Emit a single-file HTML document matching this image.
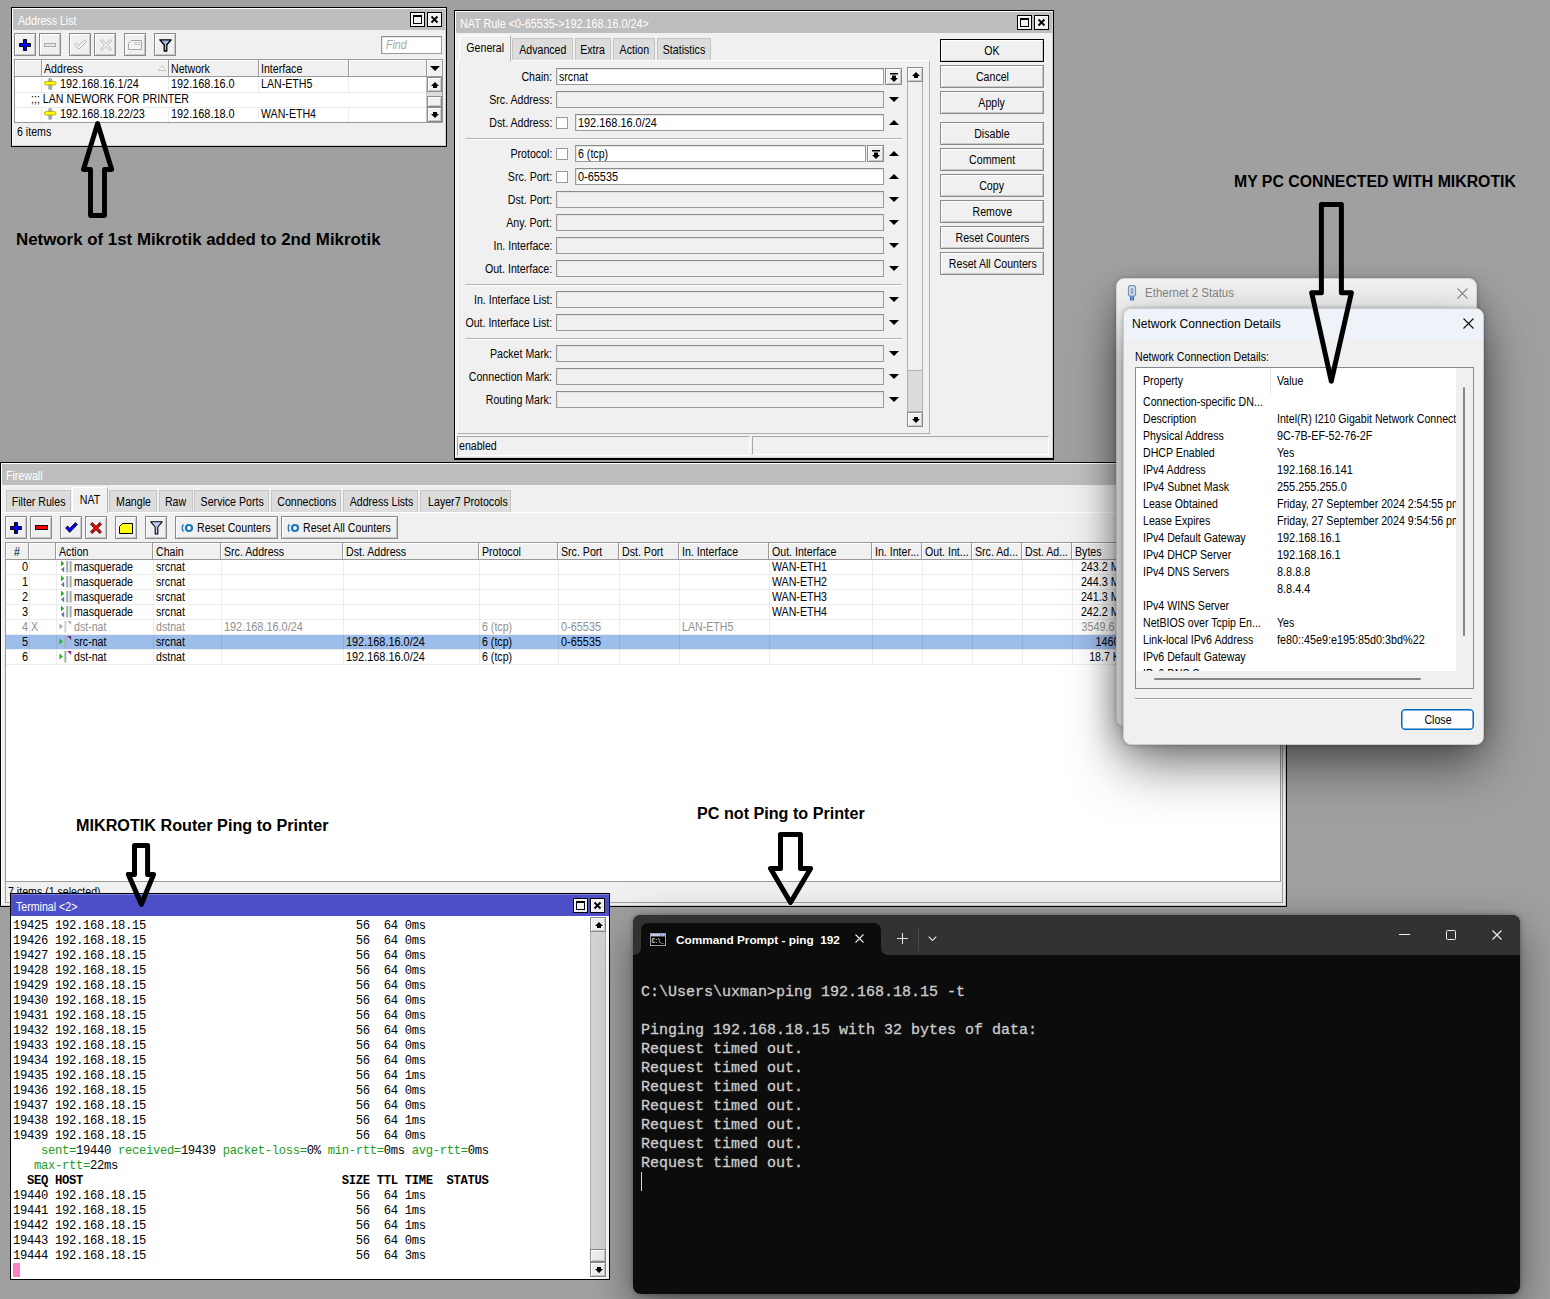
<!DOCTYPE html>
<html lang="en"><head><meta charset="utf-8"><title>Mikrotik NAT / ping screenshot</title>
<style>
*{box-sizing:border-box}
html,body{margin:0;padding:0}
body{width:1550px;height:1299px;background:#a0a0a0;position:relative;overflow:hidden;font-family:"Liberation Sans",sans-serif;font-size:12.5px;color:#000;line-height:1}
.a{position:absolute}
.win{position:absolute;background:#f0f0f0;border:1px solid #000;box-shadow:inset 1px 1px 0 #fff,inset -1px -1px 0 #d0d0d0}
.tbar{position:absolute;left:1px;right:1px;top:1px;background:#bebebe}
.tbar.act{background:#4d4fc8;border-top:1px solid #7e80e0}
.tt{position:absolute;color:#fff;white-space:nowrap;font-size:12.5px}
.n{display:inline-block;white-space:pre;transform:scaleX(0.849);transform-origin:0 50%}
.nr{display:inline-block;white-space:pre;transform:scaleX(0.849);transform-origin:100% 50%}
.nc{display:inline-block;white-space:pre;transform:scaleX(0.849);transform-origin:50% 50%}
.wb{position:absolute;width:15px;height:15px;border:1px solid #000;background:#f0f0f0;box-shadow:inset 1px 1px 0 #fff}
.btn{position:absolute;background:#f0f0f0;border:1px solid #8a8a8a;box-shadow:inset 1px 1px 0 #fff,inset -1px -1px 0 #c8c8c8;text-align:center}
.inp{position:absolute;height:17px;background:#fff;border:1px solid #9a9a9a;border-top-color:#8c8c8c;box-shadow:inset 1px 1px 0 #e3e3e3}
.inp.dis{background:#f0f0f0}
.lbl{position:absolute;text-align:right;white-space:nowrap}
.cb{position:absolute;width:12px;height:12px;background:#fff;border:1px solid #9a9a9a}
.hl{position:absolute;height:1px;background:#b4b4b4;box-shadow:0 1px 0 #fff}
.tab{position:absolute;background:#dcdcdc;border:1px solid #c4c4c4;border-bottom:none;text-align:center}
.tab.on{background:#f0f0f0;border-color:#fff #b0b0b0 #f0f0f0 #fff}
.tbl{position:absolute;background:#fff;border:1px solid #9a9a9a}
.th{position:absolute;top:0;height:17px;background:#f0f0f0;border-right:1px solid #9a9a9a;border-bottom:1px solid #9a9a9a;box-shadow:inset 1px 1px 0 #fff}
.td{position:absolute;white-space:nowrap;overflow:hidden}
.mono{font-family:"Liberation Mono",monospace}
.ann{position:absolute;font-weight:bold;white-space:nowrap;color:#000}
svg{position:absolute;overflow:visible}
</style></head>
<body>
<div class="win" style="left:0px;top:462px;width:1287px;height:445px"><div class="tbar" style="height:21px"></div><div class="tt" style="left:5px;top:7px"><span class="n">Firewall</span></div><div class="a" style="left:1px;top:49px;width:1283px;height:1px;background:#fff"></div><div class="tab" style="left:5px;top:27px;width:65px;height:22px"><span class="a" style="left:0;right:0;top:5px"><span class="nc">Filter Rules</span></span></div><div class="tab on" style="left:71px;top:24px;width:36px;height:26px"><span class="a" style="left:0;right:0;top:6px"><span class="nc">NAT</span></span></div><div class="tab" style="left:108px;top:27px;width:48px;height:22px"><span class="a" style="left:0;right:0;top:5px"><span class="nc">Mangle</span></span></div><div class="tab" style="left:158px;top:27px;width:34px;height:22px"><span class="a" style="left:0;right:0;top:5px"><span class="nc">Raw</span></span></div><div class="tab" style="left:193px;top:27px;width:75px;height:22px"><span class="a" style="left:0;right:0;top:5px"><span class="nc">Service Ports</span></span></div><div class="tab" style="left:270px;top:27px;width:70px;height:22px"><span class="a" style="left:0;right:0;top:5px"><span class="nc">Connections</span></span></div><div class="tab" style="left:342px;top:27px;width:75px;height:22px"><span class="a" style="left:0;right:0;top:5px"><span class="nc">Address Lists</span></span></div><div class="tab" style="left:419px;top:27px;width:91px;height:22px"><span class="a" style="left:0;right:0;top:5px"><span class="nc">Layer7 Protocols</span></span></div><div class="btn" style="left:4px;top:53px;width:22px;height:23px"><svg class="a" style="left:4px;top:5px" width="12" height="12"><path d="M4.5,0.5H7.5V4.5H11.5V7.5H7.5V11.5H4.5V7.5H0.5V4.5H4.5Z" fill="#0000ff" stroke="#000" stroke-width="1"/></svg></div><div class="btn" style="left:29px;top:53px;width:22px;height:23px"><svg class="a" style="left:4px;top:8px" width="13" height="6"><rect x=".5" y=".5" width="12" height="4" fill="#ff0000" stroke="#000" stroke-width=".9"/></svg></div><div class="btn" style="left:59px;top:53px;width:22px;height:23px"><svg class="a" style="left:4px;top:5px" width="13" height="12"><path d="M0.6,6L2.6,4L4.8,6.2L10.4,0.6L12.4,2.6L4.8,10.4Z" fill="#0000ff" stroke="#000" stroke-width=".8"/></svg></div><div class="btn" style="left:84px;top:53px;width:22px;height:23px"><svg class="a" style="left:4px;top:5px" width="12" height="12"><path d="M2.2,0.5L6,4.3L9.8,0.5L11.5,2.2L7.7,6L11.5,9.8L9.8,11.5L6,7.7L2.2,11.5L0.5,9.8L4.3,6L0.5,2.2Z" fill="#ff0000" stroke="#000" stroke-width=".8"/></svg></div><div class="btn" style="left:114px;top:53px;width:22px;height:23px"><svg class="a" style="left:3px;top:6px" width="14" height="11"><path d="M3.5,0.5H13.5V10.5H0.5V3.5Z" fill="#ffff00" stroke="#000"/><path d="M6.5,2.5H9M10,2.5H12" stroke="#ffffc0" stroke-width=".9"/></svg></div><div class="btn" style="left:144px;top:53px;width:22px;height:23px"><svg class="a" style="left:4px;top:4px" width="14" height="14"><path d="M0.8,0.8H12.2L7.8,6V13H5.2V6Z" fill="#c4d0f2" stroke="#000" stroke-width="1.1" stroke-linejoin="round"/></svg></div><div class="btn" style="left:174px;top:53px;width:103px;height:23px"><svg class="a" style="left:5px;top:6px" width="13" height="10"><circle cx="8" cy="5" r="3" fill="#fff" stroke="#1a78b8" stroke-width="2.2"/><path d="M2.2,1.2Q0.2,5 2.2,8.8" fill="none" stroke="#1a78b8" stroke-width="1.3"/></svg><span class="a" style="left:21px;top:5px"><span class="n">Reset Counters</span></span></div><div class="btn" style="left:280px;top:53px;width:117px;height:23px"><svg class="a" style="left:5px;top:6px" width="13" height="10"><circle cx="8" cy="5" r="3" fill="#fff" stroke="#1a78b8" stroke-width="2.2"/><path d="M2.2,1.2Q0.2,5 2.2,8.8" fill="none" stroke="#1a78b8" stroke-width="1.3"/></svg><span class="a" style="left:21px;top:5px"><span class="n">Reset All Counters</span></span></div><div class="tbl" style="left:4px;top:79px;width:1276px;height:340px"><div class="th" style="left:0px;width:23px"><span class="a" style="left:8px;top:3px"><span class="n">#</span></span></div><div class="th" style="left:23px;width:27px"><span class="a" style="left:3px;top:3px"><span class="n"></span></span></div><div class="th" style="left:50px;width:97px"><span class="a" style="left:3px;top:3px"><span class="n">Action</span></span></div><div class="th" style="left:147px;width:68px"><span class="a" style="left:3px;top:3px"><span class="n">Chain</span></span></div><div class="th" style="left:215px;width:122px"><span class="a" style="left:3px;top:3px"><span class="n">Src. Address</span></span></div><div class="th" style="left:337px;width:136px"><span class="a" style="left:3px;top:3px"><span class="n">Dst. Address</span></span></div><div class="th" style="left:473px;width:79px"><span class="a" style="left:3px;top:3px"><span class="n">Protocol</span></span></div><div class="th" style="left:552px;width:61px"><span class="a" style="left:3px;top:3px"><span class="n">Src. Port</span></span></div><div class="th" style="left:613px;width:60px"><span class="a" style="left:3px;top:3px"><span class="n">Dst. Port</span></span></div><div class="th" style="left:673px;width:90px"><span class="a" style="left:3px;top:3px"><span class="n">In. Interface</span></span></div><div class="th" style="left:763px;width:103px"><span class="a" style="left:3px;top:3px"><span class="n">Out. Interface</span></span></div><div class="th" style="left:866px;width:50px"><span class="a" style="left:3px;top:3px"><span class="n">In. Inter...</span></span></div><div class="th" style="left:916px;width:50px"><span class="a" style="left:3px;top:3px"><span class="n">Out. Int...</span></span></div><div class="th" style="left:966px;width:50px"><span class="a" style="left:3px;top:3px"><span class="n">Src. Ad...</span></span></div><div class="th" style="left:1016px;width:50px"><span class="a" style="left:3px;top:3px"><span class="n">Dst. Ad...</span></span></div><div class="th" style="left:1066px;width:61px"><span class="a" style="left:3px;top:3px"><span class="n">Bytes</span></span></div><div class="th" style="left:1127px;width:148px;border-right:none"></div><div class="a" style="left:0;top:17px;width:1274px;height:15px;background:#fff;border-bottom:1px solid #ececec;color:#000"><div class="a" style="left:23px;top:0;width:1px;height:14px;background:#ececec"></div><div class="a" style="left:50px;top:0;width:1px;height:14px;background:#ececec"></div><div class="a" style="left:147px;top:0;width:1px;height:14px;background:#ececec"></div><div class="a" style="left:215px;top:0;width:1px;height:14px;background:#ececec"></div><div class="a" style="left:337px;top:0;width:1px;height:14px;background:#ececec"></div><div class="a" style="left:473px;top:0;width:1px;height:14px;background:#ececec"></div><div class="a" style="left:552px;top:0;width:1px;height:14px;background:#ececec"></div><div class="a" style="left:613px;top:0;width:1px;height:14px;background:#ececec"></div><div class="a" style="left:673px;top:0;width:1px;height:14px;background:#ececec"></div><div class="a" style="left:763px;top:0;width:1px;height:14px;background:#ececec"></div><div class="a" style="left:866px;top:0;width:1px;height:14px;background:#ececec"></div><div class="a" style="left:916px;top:0;width:1px;height:14px;background:#ececec"></div><div class="a" style="left:966px;top:0;width:1px;height:14px;background:#ececec"></div><div class="a" style="left:1016px;top:0;width:1px;height:14px;background:#ececec"></div><div class="a" style="left:1066px;top:0;width:1px;height:14px;background:#ececec"></div><div class="a" style="left:1127px;top:0;width:1px;height:14px;background:#ececec"></div><div class="td" style="left:0;top:1px;width:22px;text-align:right"><span class="nr" style="transform:scaleX(0.872)">0</span></div><svg class="a" style="left:53px;top:0px" width="13" height="13"><path d="M2,0.5L5.2,3.5L2,6.5Z" fill="#18b418"/><path d="M5.2,6.5L2,9.5L5.2,12.5Z" fill="#5c7c9c"/><rect x="7.2" y="1" width="2" height="11.5" fill="#a0acac"/><rect x="10.6" y="1" width="2" height="11.5" fill="#a0acac"/></svg><div class="td" style="left:68px;top:1px"><span class="n">masquerade</span></div><div class="td" style="left:150px;top:1px"><span class="n">srcnat</span></div><div class="td" style="left:766px;top:1px"><span class="n">WAN-ETH1</span></div><div class="td" style="left:1067px;top:1px;width:56.5px;text-align:right"><span class="nr" style="transform:scaleX(0.860)">243.2 MiB</span></div></div><div class="a" style="left:0;top:32px;width:1274px;height:15px;background:#fff;border-bottom:1px solid #ececec;color:#000"><div class="a" style="left:23px;top:0;width:1px;height:14px;background:#ececec"></div><div class="a" style="left:50px;top:0;width:1px;height:14px;background:#ececec"></div><div class="a" style="left:147px;top:0;width:1px;height:14px;background:#ececec"></div><div class="a" style="left:215px;top:0;width:1px;height:14px;background:#ececec"></div><div class="a" style="left:337px;top:0;width:1px;height:14px;background:#ececec"></div><div class="a" style="left:473px;top:0;width:1px;height:14px;background:#ececec"></div><div class="a" style="left:552px;top:0;width:1px;height:14px;background:#ececec"></div><div class="a" style="left:613px;top:0;width:1px;height:14px;background:#ececec"></div><div class="a" style="left:673px;top:0;width:1px;height:14px;background:#ececec"></div><div class="a" style="left:763px;top:0;width:1px;height:14px;background:#ececec"></div><div class="a" style="left:866px;top:0;width:1px;height:14px;background:#ececec"></div><div class="a" style="left:916px;top:0;width:1px;height:14px;background:#ececec"></div><div class="a" style="left:966px;top:0;width:1px;height:14px;background:#ececec"></div><div class="a" style="left:1016px;top:0;width:1px;height:14px;background:#ececec"></div><div class="a" style="left:1066px;top:0;width:1px;height:14px;background:#ececec"></div><div class="a" style="left:1127px;top:0;width:1px;height:14px;background:#ececec"></div><div class="td" style="left:0;top:1px;width:22px;text-align:right"><span class="nr" style="transform:scaleX(0.872)">1</span></div><svg class="a" style="left:53px;top:0px" width="13" height="13"><path d="M2,0.5L5.2,3.5L2,6.5Z" fill="#18b418"/><path d="M5.2,6.5L2,9.5L5.2,12.5Z" fill="#5c7c9c"/><rect x="7.2" y="1" width="2" height="11.5" fill="#a0acac"/><rect x="10.6" y="1" width="2" height="11.5" fill="#a0acac"/></svg><div class="td" style="left:68px;top:1px"><span class="n">masquerade</span></div><div class="td" style="left:150px;top:1px"><span class="n">srcnat</span></div><div class="td" style="left:766px;top:1px"><span class="n">WAN-ETH2</span></div><div class="td" style="left:1067px;top:1px;width:56.5px;text-align:right"><span class="nr" style="transform:scaleX(0.860)">244.3 MiB</span></div></div><div class="a" style="left:0;top:47px;width:1274px;height:15px;background:#fff;border-bottom:1px solid #ececec;color:#000"><div class="a" style="left:23px;top:0;width:1px;height:14px;background:#ececec"></div><div class="a" style="left:50px;top:0;width:1px;height:14px;background:#ececec"></div><div class="a" style="left:147px;top:0;width:1px;height:14px;background:#ececec"></div><div class="a" style="left:215px;top:0;width:1px;height:14px;background:#ececec"></div><div class="a" style="left:337px;top:0;width:1px;height:14px;background:#ececec"></div><div class="a" style="left:473px;top:0;width:1px;height:14px;background:#ececec"></div><div class="a" style="left:552px;top:0;width:1px;height:14px;background:#ececec"></div><div class="a" style="left:613px;top:0;width:1px;height:14px;background:#ececec"></div><div class="a" style="left:673px;top:0;width:1px;height:14px;background:#ececec"></div><div class="a" style="left:763px;top:0;width:1px;height:14px;background:#ececec"></div><div class="a" style="left:866px;top:0;width:1px;height:14px;background:#ececec"></div><div class="a" style="left:916px;top:0;width:1px;height:14px;background:#ececec"></div><div class="a" style="left:966px;top:0;width:1px;height:14px;background:#ececec"></div><div class="a" style="left:1016px;top:0;width:1px;height:14px;background:#ececec"></div><div class="a" style="left:1066px;top:0;width:1px;height:14px;background:#ececec"></div><div class="a" style="left:1127px;top:0;width:1px;height:14px;background:#ececec"></div><div class="td" style="left:0;top:1px;width:22px;text-align:right"><span class="nr" style="transform:scaleX(0.872)">2</span></div><svg class="a" style="left:53px;top:0px" width="13" height="13"><path d="M2,0.5L5.2,3.5L2,6.5Z" fill="#18b418"/><path d="M5.2,6.5L2,9.5L5.2,12.5Z" fill="#5c7c9c"/><rect x="7.2" y="1" width="2" height="11.5" fill="#a0acac"/><rect x="10.6" y="1" width="2" height="11.5" fill="#a0acac"/></svg><div class="td" style="left:68px;top:1px"><span class="n">masquerade</span></div><div class="td" style="left:150px;top:1px"><span class="n">srcnat</span></div><div class="td" style="left:766px;top:1px"><span class="n">WAN-ETH3</span></div><div class="td" style="left:1067px;top:1px;width:56.5px;text-align:right"><span class="nr" style="transform:scaleX(0.860)">241.3 MiB</span></div></div><div class="a" style="left:0;top:62px;width:1274px;height:15px;background:#fff;border-bottom:1px solid #ececec;color:#000"><div class="a" style="left:23px;top:0;width:1px;height:14px;background:#ececec"></div><div class="a" style="left:50px;top:0;width:1px;height:14px;background:#ececec"></div><div class="a" style="left:147px;top:0;width:1px;height:14px;background:#ececec"></div><div class="a" style="left:215px;top:0;width:1px;height:14px;background:#ececec"></div><div class="a" style="left:337px;top:0;width:1px;height:14px;background:#ececec"></div><div class="a" style="left:473px;top:0;width:1px;height:14px;background:#ececec"></div><div class="a" style="left:552px;top:0;width:1px;height:14px;background:#ececec"></div><div class="a" style="left:613px;top:0;width:1px;height:14px;background:#ececec"></div><div class="a" style="left:673px;top:0;width:1px;height:14px;background:#ececec"></div><div class="a" style="left:763px;top:0;width:1px;height:14px;background:#ececec"></div><div class="a" style="left:866px;top:0;width:1px;height:14px;background:#ececec"></div><div class="a" style="left:916px;top:0;width:1px;height:14px;background:#ececec"></div><div class="a" style="left:966px;top:0;width:1px;height:14px;background:#ececec"></div><div class="a" style="left:1016px;top:0;width:1px;height:14px;background:#ececec"></div><div class="a" style="left:1066px;top:0;width:1px;height:14px;background:#ececec"></div><div class="a" style="left:1127px;top:0;width:1px;height:14px;background:#ececec"></div><div class="td" style="left:0;top:1px;width:22px;text-align:right"><span class="nr" style="transform:scaleX(0.872)">3</span></div><svg class="a" style="left:53px;top:0px" width="13" height="13"><path d="M2,0.5L5.2,3.5L2,6.5Z" fill="#18b418"/><path d="M5.2,6.5L2,9.5L5.2,12.5Z" fill="#5c7c9c"/><rect x="7.2" y="1" width="2" height="11.5" fill="#a0acac"/><rect x="10.6" y="1" width="2" height="11.5" fill="#a0acac"/></svg><div class="td" style="left:68px;top:1px"><span class="n">masquerade</span></div><div class="td" style="left:150px;top:1px"><span class="n">srcnat</span></div><div class="td" style="left:766px;top:1px"><span class="n">WAN-ETH4</span></div><div class="td" style="left:1067px;top:1px;width:56.5px;text-align:right"><span class="nr" style="transform:scaleX(0.860)">242.2 MiB</span></div></div><div class="a" style="left:0;top:77px;width:1274px;height:15px;background:#fff;border-bottom:1px solid #ececec;color:#909090"><div class="a" style="left:23px;top:0;width:1px;height:14px;background:#ececec"></div><div class="a" style="left:50px;top:0;width:1px;height:14px;background:#ececec"></div><div class="a" style="left:147px;top:0;width:1px;height:14px;background:#ececec"></div><div class="a" style="left:215px;top:0;width:1px;height:14px;background:#ececec"></div><div class="a" style="left:337px;top:0;width:1px;height:14px;background:#ececec"></div><div class="a" style="left:473px;top:0;width:1px;height:14px;background:#ececec"></div><div class="a" style="left:552px;top:0;width:1px;height:14px;background:#ececec"></div><div class="a" style="left:613px;top:0;width:1px;height:14px;background:#ececec"></div><div class="a" style="left:673px;top:0;width:1px;height:14px;background:#ececec"></div><div class="a" style="left:763px;top:0;width:1px;height:14px;background:#ececec"></div><div class="a" style="left:866px;top:0;width:1px;height:14px;background:#ececec"></div><div class="a" style="left:916px;top:0;width:1px;height:14px;background:#ececec"></div><div class="a" style="left:966px;top:0;width:1px;height:14px;background:#ececec"></div><div class="a" style="left:1016px;top:0;width:1px;height:14px;background:#ececec"></div><div class="a" style="left:1066px;top:0;width:1px;height:14px;background:#ececec"></div><div class="a" style="left:1127px;top:0;width:1px;height:14px;background:#ececec"></div><div class="td" style="left:0;top:1px;width:22px;text-align:right"><span class="nr" style="transform:scaleX(0.872)">4</span></div><div class="td" style="left:25px;top:1px"><span class="n">X</span></div><svg class="a" style="left:53px;top:0px" width="13" height="13"><path d="M0.5,3.4L3.8,6.5L0.5,9.6Z" fill="#a8a8a8"/><rect x="5.4" y="1" width="2" height="11.5" fill="#d0d0d0"/><path d="M8.2,1H12.2V5Z" fill="#b4b4b4"/></svg><div class="td" style="left:68px;top:1px"><span class="n">dst-nat</span></div><div class="td" style="left:150px;top:1px"><span class="n">dstnat</span></div><div class="td" style="left:218px;top:1px"><span class="n" style="transform:scaleX(0.872)">192.168.16.0/24</span></div><div class="td" style="left:476px;top:1px"><span class="n">6 (tcp)</span></div><div class="td" style="left:555px;top:1px"><span class="n" style="transform:scaleX(0.872)">0-65535</span></div><div class="td" style="left:676px;top:1px"><span class="n">LAN-ETH5</span></div><div class="td" style="left:1067px;top:1px;width:56.5px;text-align:right"><span class="nr" style="transform:scaleX(0.861)">3549.6 KiB</span></div></div><div class="a" style="left:0;top:92px;width:1274px;height:15px;background:#9dbdeb;border-bottom:1px solid #ececec;color:#000"><div class="a" style="left:23px;top:0;width:1px;height:14px;background:#8eaedc"></div><div class="a" style="left:50px;top:0;width:1px;height:14px;background:#8eaedc"></div><div class="a" style="left:147px;top:0;width:1px;height:14px;background:#8eaedc"></div><div class="a" style="left:215px;top:0;width:1px;height:14px;background:#8eaedc"></div><div class="a" style="left:337px;top:0;width:1px;height:14px;background:#8eaedc"></div><div class="a" style="left:473px;top:0;width:1px;height:14px;background:#8eaedc"></div><div class="a" style="left:552px;top:0;width:1px;height:14px;background:#8eaedc"></div><div class="a" style="left:613px;top:0;width:1px;height:14px;background:#8eaedc"></div><div class="a" style="left:673px;top:0;width:1px;height:14px;background:#8eaedc"></div><div class="a" style="left:763px;top:0;width:1px;height:14px;background:#8eaedc"></div><div class="a" style="left:866px;top:0;width:1px;height:14px;background:#8eaedc"></div><div class="a" style="left:916px;top:0;width:1px;height:14px;background:#8eaedc"></div><div class="a" style="left:966px;top:0;width:1px;height:14px;background:#8eaedc"></div><div class="a" style="left:1016px;top:0;width:1px;height:14px;background:#8eaedc"></div><div class="a" style="left:1066px;top:0;width:1px;height:14px;background:#8eaedc"></div><div class="a" style="left:1127px;top:0;width:1px;height:14px;background:#8eaedc"></div><div class="td" style="left:0;top:1px;width:22px;text-align:right"><span class="nr" style="transform:scaleX(0.872)">5</span></div><svg class="a" style="left:53px;top:0px" width="13" height="13"><path d="M0.5,3.4L3.8,6.5L0.5,9.6Z" fill="#18b418"/><rect x="5.4" y="1" width="2" height="11.5" fill="#a8b0a8"/><path d="M8.2,1H12.2V5Z" fill="#802080"/></svg><div class="td" style="left:68px;top:1px"><span class="n">src-nat</span></div><div class="td" style="left:150px;top:1px"><span class="n">srcnat</span></div><div class="td" style="left:340px;top:1px"><span class="n" style="transform:scaleX(0.872)">192.168.16.0/24</span></div><div class="td" style="left:476px;top:1px"><span class="n">6 (tcp)</span></div><div class="td" style="left:555px;top:1px"><span class="n" style="transform:scaleX(0.872)">0-65535</span></div><div class="td" style="left:1067px;top:1px;width:56.5px;text-align:right"><span class="nr" style="transform:scaleX(0.863)">1460 B</span></div></div><div class="a" style="left:0;top:107px;width:1274px;height:15px;background:#fff;border-bottom:1px solid #ececec;color:#000"><div class="a" style="left:23px;top:0;width:1px;height:14px;background:#ececec"></div><div class="a" style="left:50px;top:0;width:1px;height:14px;background:#ececec"></div><div class="a" style="left:147px;top:0;width:1px;height:14px;background:#ececec"></div><div class="a" style="left:215px;top:0;width:1px;height:14px;background:#ececec"></div><div class="a" style="left:337px;top:0;width:1px;height:14px;background:#ececec"></div><div class="a" style="left:473px;top:0;width:1px;height:14px;background:#ececec"></div><div class="a" style="left:552px;top:0;width:1px;height:14px;background:#ececec"></div><div class="a" style="left:613px;top:0;width:1px;height:14px;background:#ececec"></div><div class="a" style="left:673px;top:0;width:1px;height:14px;background:#ececec"></div><div class="a" style="left:763px;top:0;width:1px;height:14px;background:#ececec"></div><div class="a" style="left:866px;top:0;width:1px;height:14px;background:#ececec"></div><div class="a" style="left:916px;top:0;width:1px;height:14px;background:#ececec"></div><div class="a" style="left:966px;top:0;width:1px;height:14px;background:#ececec"></div><div class="a" style="left:1016px;top:0;width:1px;height:14px;background:#ececec"></div><div class="a" style="left:1066px;top:0;width:1px;height:14px;background:#ececec"></div><div class="a" style="left:1127px;top:0;width:1px;height:14px;background:#ececec"></div><div class="td" style="left:0;top:1px;width:22px;text-align:right"><span class="nr" style="transform:scaleX(0.872)">6</span></div><svg class="a" style="left:53px;top:0px" width="13" height="13"><path d="M0.5,3.4L3.8,6.5L0.5,9.6Z" fill="#18b418"/><rect x="5.4" y="1" width="2" height="11.5" fill="#a0acac"/><path d="M8.2,1H12.2V5Z" fill="#802080"/></svg><div class="td" style="left:68px;top:1px"><span class="n">dst-nat</span></div><div class="td" style="left:150px;top:1px"><span class="n">dstnat</span></div><div class="td" style="left:340px;top:1px"><span class="n" style="transform:scaleX(0.872)">192.168.16.0/24</span></div><div class="td" style="left:476px;top:1px"><span class="n">6 (tcp)</span></div><div class="td" style="left:1067px;top:1px;width:56.5px;text-align:right"><span class="nr">18.7 KiB</span></div></div></div><div class="a" style="left:4px;top:419px;width:1278px;height:21px;border:1px solid #a0a0a0;border-top:none"><span class="a" style="left:2px;top:4px"><span class="n">7 items (1 selected)</span></span></div><div class="a" style="left:1281px;top:79px;width:1px;height:341px;background:#a0a0a0"></div></div>
<div class="win" style="left:11px;top:7px;width:436px;height:140px"><div class="tbar" style="height:21px"></div><div class="tt" style="left:6px;top:7px"><span class="n">Address List</span></div><div class="wb" style="left:398px;top:4px"><div class="a" style="left:2px;top:2px;width:9px;height:9px;border:1px solid #000;border-top-width:2px"></div></div><div class="wb" style="left:415px;top:4px"><svg class="a" style="left:3px;top:3px" width="7" height="7"><path d="M0.5,0.5L6.5,6.5M6.5,0.5L0.5,6.5" stroke="#000" stroke-width="1.8"/></svg></div><div class="btn" style="left:2px;top:25px;width:22px;height:23px"><svg class="a" style="left:4px;top:5px" width="12" height="12"><path d="M4.5,0.5H7.5V4.5H11.5V7.5H7.5V11.5H4.5V7.5H0.5V4.5H4.5Z" fill="#0000ff" stroke="#000" stroke-width="1"/></svg></div><div class="btn" style="left:27px;top:25px;width:22px;height:23px"><div class="a" style="left:4px;top:9px;width:12px;height:4px;border:1px solid #a8a8a8;background:#e8e8e8"></div></div><div class="btn" style="left:57px;top:25px;width:22px;height:23px"><svg class="a" style="left:4px;top:5px" width="13" height="12"><path d="M0.6,6L2.4,4.2L4.8,6.6L10.6,0.8L12.4,2.6L4.8,10.2Z" fill="#f6f6f6" stroke="#a8a8a8" stroke-width=".9"/></svg></div><div class="btn" style="left:82px;top:25px;width:22px;height:23px"><svg class="a" style="left:5px;top:5px" width="12" height="12"><path d="M2,0.5L6,4.5L10,0.5L11.5,2L7.5,6L11.5,10L10,11.5L6,7.5L2,11.5L0.5,10L4.5,6L0.5,2Z" fill="#f6f6f6" stroke="#a8a8a8" stroke-width=".9"/></svg></div><div class="btn" style="left:112px;top:25px;width:22px;height:23px"><svg class="a" style="left:3px;top:6px" width="14" height="10"><path d="M3.5,0.5H13.5V9.5H0.5V3.5Z" fill="#f4f4f4" stroke="#a4a4a4"/><path d="M6.5,2.5H9M10,2.5H12M6.5,4.5H9M10,4.5H12" stroke="#b0b0b0" stroke-width=".9"/></svg></div><div class="btn" style="left:142px;top:25px;width:22px;height:23px"><svg class="a" style="left:4px;top:5px" width="14" height="13"><path d="M0.8,0.8H12.2L7.8,5.8V12H5.2V5.8Z" fill="#a8bcec" stroke="#000" stroke-width="1.3" stroke-linejoin="round"/></svg></div><div class="inp" style="left:369px;top:28px;width:61px;height:18px"><span class="a" style="left:4px;top:2px;color:#a8a8a8;font-style:italic"><span class="n">Find</span></span></div><div class="tbl" style="left:2px;top:51px;width:429px;height:64px"><div class="th" style="left:0px;width:27px"><span class="a" style="left:2px;top:3px"><span class="n"></span></span></div><div class="th" style="left:27px;width:127px"><span class="a" style="left:2px;top:3px"><span class="n">Address</span></span></div><div class="th" style="left:154px;width:90px"><span class="a" style="left:2px;top:3px"><span class="n">Network</span></span></div><div class="th" style="left:244px;width:90px"><span class="a" style="left:2px;top:3px"><span class="n">Interface</span></span></div><div class="th" style="left:334px;width:78px"><span class="a" style="left:2px;top:3px"><span class="n"></span></span></div><div class="th" style="left:412px;width:15px;border-right:none"><svg class="a" style="left:3px;top:6px" width="10" height="5"><path d="M0,0H10L5,5Z" fill="#000"/></svg></div><svg class="a" style="left:143px;top:5px" width="8" height="6"><path d="M0.5,5.5H7.5L4,0.5Z" fill="#f8f8f8" stroke="#c8c8c8"/></svg><svg class="a" style="left:29px;top:18px" width="13" height="13"><rect x="4.2" y="0" width="4" height="12" rx="1.8" fill="#a2aeae"/><rect x="0.4" y="3.4" width="11.6" height="3.6" rx="1.8" fill="#ffff00" stroke="#a8a000" stroke-width=".8"/></svg><div class="td" style="left:45px;top:18px"><span class="n" style="transform:scaleX(0.872)">192.168.16.1/24</span></div><div class="td" style="left:156px;top:18px"><span class="n" style="transform:scaleX(0.872)">192.168.16.0</span></div><div class="td" style="left:246px;top:18px"><span class="n">LAN-ETH5</span></div><div class="a" style="left:26px;top:17px;width:1px;height:15px;background:#ececec"></div><div class="a" style="left:153px;top:17px;width:1px;height:15px;background:#ececec"></div><div class="a" style="left:243px;top:17px;width:1px;height:15px;background:#ececec"></div><div class="a" style="left:333px;top:17px;width:1px;height:15px;background:#ececec"></div><div class="a" style="left:0;top:32px;width:412px;height:1px;background:#ececec"></div><div class="td" style="left:16px;top:33px"><span class="n">;;; LAN NEWORK FOR PRINTER</span></div><div class="a" style="left:0;top:47px;width:412px;height:1px;background:#ececec"></div><svg class="a" style="left:29px;top:48px" width="13" height="13"><rect x="4.2" y="0" width="4" height="12" rx="1.8" fill="#a2aeae"/><rect x="0.4" y="3.4" width="11.6" height="3.6" rx="1.8" fill="#ffff00" stroke="#a8a000" stroke-width=".8"/></svg><div class="td" style="left:45px;top:48px"><span class="n" style="transform:scaleX(0.872)">192.168.18.22/23</span></div><div class="td" style="left:156px;top:48px"><span class="n" style="transform:scaleX(0.872)">192.168.18.0</span></div><div class="td" style="left:246px;top:48px"><span class="n">WAN-ETH4</span></div><div class="a" style="left:26px;top:47px;width:1px;height:15px;background:#ececec"></div><div class="a" style="left:153px;top:47px;width:1px;height:15px;background:#ececec"></div><div class="a" style="left:243px;top:47px;width:1px;height:15px;background:#ececec"></div><div class="a" style="left:333px;top:47px;width:1px;height:15px;background:#ececec"></div><div class="a" style="left:411px;top:17px;width:16px;height:45px;background:#f0f0f0;border-left:1px solid #c8c8c8"></div><div class="btn" style="left:412px;top:17px;width:15px;height:15px"><svg class="a" style="left:3px;top:4px" width="8" height="6"><path d="M4,0L8,4H6V6H2V4H0Z" fill="#000"/></svg></div><div class="a" style="left:412px;top:32px;width:15px;height:4px;background:#dcdcdc"></div><div class="btn" style="left:412px;top:36px;width:15px;height:11px"></div><div class="btn" style="left:412px;top:47px;width:15px;height:15px"><svg class="a" style="left:3px;top:4px" width="8" height="6"><path d="M4,6L8,2H6V0H2V2H0Z" fill="#000"/></svg></div></div><div class="a" style="left:5px;top:118px"><span class="n">6 items</span></div></div>
<div class="win" style="left:454px;top:10px;width:600px;height:450px;border-bottom-width:2px"><div class="tbar" style="height:21px"></div><div class="tt" style="left:5px;top:7px"><span class="n" style="transform:scaleX(0.863)">NAT Rule &lt;0-65535-&gt;192.168.16.0/24&gt;</span></div><div class="wb" style="left:562px;top:4px"><div class="a" style="left:2px;top:2px;width:9px;height:9px;border:1px solid #000;border-top-width:2px"></div></div><div class="wb" style="left:579px;top:4px"><svg class="a" style="left:3px;top:3px" width="7" height="7"><path d="M0.5,0.5L6.5,6.5M6.5,0.5L0.5,6.5" stroke="#000" stroke-width="1.8"/></svg></div><div class="a" style="left:2px;top:49px;width:473px;height:374px;border:1px solid #b0b0b0;border-left-color:#fff;border-top-color:#fff"></div><div class="tab on" style="left:4px;top:24px;width:52px;height:26px"><span class="a" style="left:0;right:0;top:6px"><span class="nc">General</span></span></div><div class="tab" style="left:57px;top:27px;width:61px;height:22px"><span class="a" style="left:0;right:0;top:5px"><span class="nc">Advanced</span></span></div><div class="tab" style="left:120px;top:27px;width:36px;height:22px"><span class="a" style="left:0;right:0;top:5px"><span class="nc">Extra</span></span></div><div class="tab" style="left:158px;top:27px;width:42px;height:22px"><span class="a" style="left:0;right:0;top:5px"><span class="nc">Action</span></span></div><div class="tab" style="left:202px;top:27px;width:54px;height:22px"><span class="a" style="left:0;right:0;top:5px"><span class="nc">Statistics</span></span></div><div class="lbl" style="left:-43px;top:60px;width:140px"><span class="nr">Chain:</span></div><div class="inp" style="left:101px;top:57px;width:328px"><span class="a" style="left:2px;top:2px"><span class="n">srcnat</span></span></div><div class="btn" style="left:430px;top:57px;width:17px;height:17px"><svg class="a" style="left:4px;top:4px" width="8" height="9"><path d="M0,0H8V1.4H0Z M4,9L8,5H6V2.6H2V5H0Z" fill="#000"/></svg></div><div class="lbl" style="left:-43px;top:83px;width:140px"><span class="nr">Src. Address:</span></div><div class="inp dis" style="left:101px;top:80px;width:328px"></div><svg class="a" style="left:434px;top:86px" width="10" height="5"><path d="M0,0H10L5,5Z" fill="#000"/></svg><div class="lbl" style="left:-43px;top:106px;width:140px"><span class="nr">Dst. Address:</span></div><div class="cb" style="left:101px;top:106px"></div><div class="inp" style="left:120px;top:103px;width:309px"><span class="a" style="left:2px;top:2px"><span class="n" style="transform:scaleX(0.872)">192.168.16.0/24</span></span></div><svg class="a" style="left:434px;top:109px" width="10" height="5"><path d="M0,5H10L5,0Z" fill="#000"/></svg><div class="hl" style="left:10px;top:127px;width:437px"></div><div class="lbl" style="left:-43px;top:137px;width:140px"><span class="nr">Protocol:</span></div><div class="cb" style="left:101px;top:137px"></div><div class="inp" style="left:120px;top:134px;width:291px"><span class="a" style="left:2px;top:2px"><span class="n">6 (tcp)</span></span></div><div class="btn" style="left:412px;top:134px;width:17px;height:17px"><svg class="a" style="left:4px;top:4px" width="8" height="9"><path d="M0,0H8V1.4H0Z M4,9L8,5H6V2.6H2V5H0Z" fill="#000"/></svg></div><svg class="a" style="left:434px;top:140px" width="10" height="5"><path d="M0,5H10L5,0Z" fill="#000"/></svg><div class="lbl" style="left:-43px;top:160px;width:140px"><span class="nr">Src. Port:</span></div><div class="cb" style="left:101px;top:160px"></div><div class="inp" style="left:120px;top:157px;width:309px"><span class="a" style="left:2px;top:2px"><span class="n" style="transform:scaleX(0.872)">0-65535</span></span></div><svg class="a" style="left:434px;top:163px" width="10" height="5"><path d="M0,5H10L5,0Z" fill="#000"/></svg><div class="lbl" style="left:-43px;top:183px;width:140px"><span class="nr">Dst. Port:</span></div><div class="inp dis" style="left:101px;top:180px;width:328px"></div><svg class="a" style="left:434px;top:186px" width="10" height="5"><path d="M0,0H10L5,5Z" fill="#000"/></svg><div class="lbl" style="left:-43px;top:206px;width:140px"><span class="nr">Any. Port:</span></div><div class="inp dis" style="left:101px;top:203px;width:328px"></div><svg class="a" style="left:434px;top:209px" width="10" height="5"><path d="M0,0H10L5,5Z" fill="#000"/></svg><div class="lbl" style="left:-43px;top:229px;width:140px"><span class="nr">In. Interface:</span></div><div class="inp dis" style="left:101px;top:226px;width:328px"></div><svg class="a" style="left:434px;top:232px" width="10" height="5"><path d="M0,0H10L5,5Z" fill="#000"/></svg><div class="lbl" style="left:-43px;top:252px;width:140px"><span class="nr">Out. Interface:</span></div><div class="inp dis" style="left:101px;top:249px;width:328px"></div><svg class="a" style="left:434px;top:255px" width="10" height="5"><path d="M0,0H10L5,5Z" fill="#000"/></svg><div class="hl" style="left:10px;top:273px;width:437px"></div><div class="lbl" style="left:-43px;top:283px;width:140px"><span class="nr">In. Interface List:</span></div><div class="inp dis" style="left:101px;top:280px;width:328px"></div><svg class="a" style="left:434px;top:286px" width="10" height="5"><path d="M0,0H10L5,5Z" fill="#000"/></svg><div class="lbl" style="left:-43px;top:306px;width:140px"><span class="nr">Out. Interface List:</span></div><div class="inp dis" style="left:101px;top:303px;width:328px"></div><svg class="a" style="left:434px;top:309px" width="10" height="5"><path d="M0,0H10L5,5Z" fill="#000"/></svg><div class="hl" style="left:10px;top:327px;width:437px"></div><div class="lbl" style="left:-43px;top:337px;width:140px"><span class="nr">Packet Mark:</span></div><div class="inp dis" style="left:101px;top:334px;width:328px"></div><svg class="a" style="left:434px;top:340px" width="10" height="5"><path d="M0,0H10L5,5Z" fill="#000"/></svg><div class="lbl" style="left:-43px;top:360px;width:140px"><span class="nr">Connection Mark:</span></div><div class="inp dis" style="left:101px;top:357px;width:328px"></div><svg class="a" style="left:434px;top:363px" width="10" height="5"><path d="M0,0H10L5,5Z" fill="#000"/></svg><div class="lbl" style="left:-43px;top:383px;width:140px"><span class="nr">Routing Mark:</span></div><div class="inp dis" style="left:101px;top:380px;width:328px"></div><svg class="a" style="left:434px;top:386px" width="10" height="5"><path d="M0,0H10L5,5Z" fill="#000"/></svg><div class="a" style="left:452px;top:56px;width:16px;height:360px;background:#f0f0f0;border:1px solid #b0b0b0"></div><div class="btn" style="left:452px;top:56px;width:16px;height:15px"><svg class="a" style="left:4px;top:4px" width="8" height="6"><path d="M4,0L8,4H6V6H2V4H0Z" fill="#000"/></svg></div><div class="a" style="left:453px;top:359px;width:14px;height:42px;background:#dcdcdc;border-top:1px solid #b0b0b0;border-bottom:1px solid #b0b0b0"></div><div class="btn" style="left:452px;top:401px;width:16px;height:15px"><svg class="a" style="left:4px;top:4px" width="8" height="6"><path d="M4,6L8,2H6V0H2V2H0Z" fill="#000"/></svg></div><div class="btn" style="left:485px;top:28px;width:104px;height:23px;border-color:#000"><span class="a" style="left:0;right:0;top:5px"><span class="nc">OK</span></span></div><div class="btn" style="left:485px;top:54px;width:104px;height:23px"><span class="a" style="left:0;right:0;top:5px"><span class="nc">Cancel</span></span></div><div class="btn" style="left:485px;top:80px;width:104px;height:23px"><span class="a" style="left:0;right:0;top:5px"><span class="nc">Apply</span></span></div><div class="btn" style="left:485px;top:111px;width:104px;height:23px"><span class="a" style="left:0;right:0;top:5px"><span class="nc">Disable</span></span></div><div class="btn" style="left:485px;top:137px;width:104px;height:23px"><span class="a" style="left:0;right:0;top:5px"><span class="nc">Comment</span></span></div><div class="btn" style="left:485px;top:163px;width:104px;height:23px"><span class="a" style="left:0;right:0;top:5px"><span class="nc">Copy</span></span></div><div class="btn" style="left:485px;top:189px;width:104px;height:23px"><span class="a" style="left:0;right:0;top:5px"><span class="nc">Remove</span></span></div><div class="btn" style="left:485px;top:215px;width:104px;height:23px"><span class="a" style="left:0;right:0;top:5px"><span class="nc">Reset Counters</span></span></div><div class="btn" style="left:485px;top:241px;width:104px;height:23px"><span class="a" style="left:0;right:0;top:5px"><span class="nc">Reset All Counters</span></span></div><div class="a" style="left:2px;top:425px;width:293px;height:20px;border:1px solid #fff;border-top-color:#a8a8a8;border-left-color:#a8a8a8"><span class="a" style="left:1px;top:3px"><span class="n">enabled</span></span></div><div class="a" style="left:297px;top:425px;width:297px;height:19px;border:1px solid #fff;border-top-color:#a8a8a8;border-left-color:#a8a8a8"></div></div>
<div class="a" style="left:1116px;top:278px;width:361px;height:449px;background:#f3f3f3;border-radius:8px;box-shadow:0 14px 32px rgba(0,0,0,.32),0 0 4px rgba(0,0,0,.22);border:1px solid #d6d6d6"><svg class="a" style="left:10px;top:6px" width="10" height="16"><rect x="1.5" y="0.7" width="7" height="10.5" rx="2.2" fill="#dfeaf6" stroke="#7f97b5" stroke-width="1.2"/><rect x="3.6" y="3" width="2.8" height="6" fill="#9ab3cf"/><rect x="3" y="11.5" width="1.7" height="4" fill="#1e73c8"/><rect x="5.4" y="11.5" width="1.7" height="4" fill="#1e73c8"/></svg><div class="a" style="left:28px;top:8px;font-size:12px;color:#858585;white-space:nowrap;transform:scaleX(.96);transform-origin:0 50%">Ethernet 2 Status</div><svg class="a" style="left:340px;top:9px" width="11" height="11"><path d="M0.5,0.5L10.5,10.5M10.5,0.5L0.5,10.5" stroke="#8a8a8a" stroke-width="1.1"/></svg></div>
<div class="a" style="left:1123px;top:308px;width:361px;height:437px;background:#f0f0f0;border-radius:8px;box-shadow:0 20px 52px rgba(0,0,0,.50),0 0 4px rgba(0,0,0,.25);border:1px solid #c8ccd2;overflow:hidden"><div class="a" style="left:0;top:0;width:361px;height:30px;background:#eef3f9"></div><div class="a" style="left:8px;top:9px;font-size:12.5px;white-space:nowrap;transform:scaleX(.965);transform-origin:0 50%">Network Connection Details</div><svg class="a" style="left:339px;top:9px" width="11" height="11"><path d="M0.5,0.5L10.5,10.5M10.5,0.5L0.5,10.5" stroke="#111" stroke-width="1.1"/></svg><div class="a" style="left:11px;top:42px"><span class="n">Network Connection Details:</span></div><div class="a" style="left:11px;top:58px;width:339px;height:322px;background:#f0f0f0;border:1px solid #828790"><div class="a" style="left:0;top:0;width:320px;height:303px;background:#fff;overflow:hidden"><div class="a" style="left:134px;top:1px;width:1px;height:24px;background:#e0e0e0"></div><div class="a" style="left:7px;top:7px"><span class="n">Property</span></div><div class="a" style="left:141px;top:7px"><span class="n">Value</span></div><div class="a" style="left:7px;top:28px"><span class="n">Connection-specific DN...</span></div><div class="a" style="left:7px;top:45px"><span class="n">Description</span></div><div class="a" style="left:141px;top:45px"><span class="n">Intel(R) I210 Gigabit Network Connection</span></div><div class="a" style="left:7px;top:62px"><span class="n">Physical Address</span></div><div class="a" style="left:141px;top:62px"><span class="n" style="transform:scaleX(0.864)">9C-7B-EF-52-76-2F</span></div><div class="a" style="left:7px;top:79px"><span class="n">DHCP Enabled</span></div><div class="a" style="left:141px;top:79px"><span class="n">Yes</span></div><div class="a" style="left:7px;top:96px"><span class="n">IPv4 Address</span></div><div class="a" style="left:141px;top:96px"><span class="n" style="transform:scaleX(0.872)">192.168.16.141</span></div><div class="a" style="left:7px;top:113px"><span class="n">IPv4 Subnet Mask</span></div><div class="a" style="left:141px;top:113px"><span class="n" style="transform:scaleX(0.872)">255.255.255.0</span></div><div class="a" style="left:7px;top:130px"><span class="n">Lease Obtained</span></div><div class="a" style="left:141px;top:130px"><span class="n">Friday, 27 September 2024 2:54:55 pm</span></div><div class="a" style="left:7px;top:147px"><span class="n">Lease Expires</span></div><div class="a" style="left:141px;top:147px"><span class="n">Friday, 27 September 2024 9:54:56 pm</span></div><div class="a" style="left:7px;top:164px"><span class="n">IPv4 Default Gateway</span></div><div class="a" style="left:141px;top:164px"><span class="n" style="transform:scaleX(0.872)">192.168.16.1</span></div><div class="a" style="left:7px;top:181px"><span class="n">IPv4 DHCP Server</span></div><div class="a" style="left:141px;top:181px"><span class="n" style="transform:scaleX(0.872)">192.168.16.1</span></div><div class="a" style="left:7px;top:198px"><span class="n">IPv4 DNS Servers</span></div><div class="a" style="left:141px;top:198px"><span class="n" style="transform:scaleX(0.872)">8.8.8.8</span></div><div class="a" style="left:141px;top:215px"><span class="n" style="transform:scaleX(0.872)">8.8.4.4</span></div><div class="a" style="left:7px;top:232px"><span class="n">IPv4 WINS Server</span></div><div class="a" style="left:7px;top:249px"><span class="n">NetBIOS over Tcpip En...</span></div><div class="a" style="left:141px;top:249px"><span class="n">Yes</span></div><div class="a" style="left:7px;top:266px"><span class="n">Link-local IPv6 Address</span></div><div class="a" style="left:141px;top:266px"><span class="n" style="transform:scaleX(0.864)">fe80::45e9:e195:85d0:3bd%22</span></div><div class="a" style="left:7px;top:283px"><span class="n">IPv6 Default Gateway</span></div><div class="a" style="left:7px;top:300px"><span class="n">IPv6 DNS Server</span></div></div><div class="a" style="left:327px;top:19px;width:2px;height:249px;background:#868686;border-radius:1px"></div><div class="a" style="left:18px;top:310px;width:267px;height:2px;background:#868686;border-radius:1px"></div></div><div class="a" style="left:11px;top:389px;width:337px;height:1px;background:#a0a0a0;box-shadow:0 1px 0 #fff"></div><div class="a" style="left:277px;top:400px;width:73px;height:21px;background:#fdfdfd;border:1px solid #0067c0;border-radius:4px;box-shadow:inset 0 0 0 .5px #0067c0;text-align:center"><span class="a" style="left:0;right:0;top:4px"><span class="nc">Close</span></span></div></div>
<div class="win" style="left:10px;top:893px;width:600px;height:387px;background:#fff;box-shadow:none"><div class="tbar act" style="height:22px;left:0;right:0;top:0"></div><div class="tt" style="left:5px;top:7px"><span class="n">Terminal &lt;2&gt;</span></div><div class="wb" style="left:562px;top:4px"><div class="a" style="left:2px;top:2px;width:9px;height:9px;border:1px solid #000;border-top-width:2px"></div></div><div class="wb" style="left:579px;top:4px"><svg class="a" style="left:3px;top:3px" width="7" height="7"><path d="M0.5,0.5L6.5,6.5M6.5,0.5L0.5,6.5" stroke="#000" stroke-width="1.8"/></svg></div><pre class="mono a" style="margin:0;left:2px;top:25px;font-size:12.2px;letter-spacing:-0.32px;line-height:15px;color:#000">19425 192.168.18.15                              56  64 0ms
19426 192.168.18.15                              56  64 0ms
19427 192.168.18.15                              56  64 0ms
19428 192.168.18.15                              56  64 0ms
19429 192.168.18.15                              56  64 0ms
19430 192.168.18.15                              56  64 0ms
19431 192.168.18.15                              56  64 0ms
19432 192.168.18.15                              56  64 0ms
19433 192.168.18.15                              56  64 0ms
19434 192.168.18.15                              56  64 0ms
19435 192.168.18.15                              56  64 1ms
19436 192.168.18.15                              56  64 0ms
19437 192.168.18.15                              56  64 0ms
19438 192.168.18.15                              56  64 1ms
19439 192.168.18.15                              56  64 0ms
    <span style="color:#1c9c1c">sent=</span>19440 <span style="color:#1c9c1c">received=</span>19439 <span style="color:#1c9c1c">packet-loss=</span>0% <span style="color:#1c9c1c">min-rtt=</span>0ms <span style="color:#1c9c1c">avg-rtt=</span>0ms
   <span style="color:#1c9c1c">max-rtt=</span>22ms
<b>  SEQ HOST                                     SIZE TTL TIME  STATUS</b>
19440 192.168.18.15                              56  64 1ms
19441 192.168.18.15                              56  64 1ms
19442 192.168.18.15                              56  64 1ms
19443 192.168.18.15                              56  64 0ms
19444 192.168.18.15                              56  64 3ms</pre><div class="a" style="left:2px;top:369px;width:7px;height:14px;background:#ff80c0"></div><div class="a" style="left:579px;top:23px;width:16px;height:360px;background:#f0f0f0;border:1px solid #b4b4b4"></div><div class="a" style="left:580px;top:38px;width:14px;height:317px;background:#d4d4d4"></div><div class="btn" style="left:579px;top:23px;width:16px;height:15px"><svg class="a" style="left:4px;top:4px" width="8" height="6"><path d="M4,0L8,4H6V6H2V4H0Z" fill="#000"/></svg></div><div class="btn" style="left:579px;top:355px;width:16px;height:13px"></div><div class="btn" style="left:579px;top:368px;width:16px;height:15px"><svg class="a" style="left:4px;top:4px" width="8" height="6"><path d="M4,6L8,2H6V0H2V2H0Z" fill="#000"/></svg></div></div>
<div class="a" style="left:633px;top:915px;width:887px;height:379px;background:#0c0c0c;border-radius:8px;box-shadow:0 16px 44px rgba(0,0,0,.48),0 0 5px rgba(0,0,0,.35);overflow:hidden"><div class="a" style="left:0;top:0;width:887px;height:40px;background:#323232"></div><div class="a" style="left:8px;top:8px;width:240px;height:32px;background:#0c0c0c;border-radius:7px 7px 0 0"></div><div class="a" style="left:248px;top:33px;width:7px;height:7px;background:#0c0c0c"><div class="a" style="left:0;top:0;width:7px;height:7px;background:#323232;border-bottom-left-radius:7px"></div></div><div class="a" style="left:1px;top:33px;width:7px;height:7px;background:#0c0c0c"><div class="a" style="left:0;top:0;width:7px;height:7px;background:#323232;border-bottom-right-radius:7px"></div></div><svg class="a" style="left:17px;top:18px" width="16" height="13"><rect x=".5" y=".5" width="15" height="12" fill="#000" stroke="#9ea2ae"/><rect x="1" y="1" width="14" height="2.4" fill="#c4cad8"/><rect x="10" y="1.6" width="1" height="1" fill="#4a64b0"/><rect x="12" y="1.6" width="1" height="1" fill="#4a64b0"/><rect x="14" y="1.6" width=".8" height="1" fill="#4a64b0"/><text x="1.8" y="10" font-family="Liberation Mono,monospace" font-size="6.6" font-weight="bold" fill="#fff" textLength="12" lengthAdjust="spacingAndGlyphs">C:\_</text></svg><div class="a" style="left:43px;top:20px;font-size:11.8px;font-weight:bold;color:#fff;white-space:pre">Command Prompt - ping  192</div><svg class="a" style="left:222px;top:19px" width="9" height="9"><path d="M0.5,0.5L8.5,8.5M8.5,0.5L0.5,8.5" stroke="#e8e8e8" stroke-width="1.1"/></svg><svg class="a" style="left:264px;top:18px" width="11" height="11"><path d="M5.5,0V11M0,5.5H11" stroke="#e0e0e0" stroke-width="1.1"/></svg><div class="a" style="left:285px;top:12px;width:1px;height:24px;background:#474747"></div><svg class="a" style="left:295px;top:21px" width="9" height="6"><path d="M0.7,0.7L4.5,4.5L8.3,0.7" fill="none" stroke="#e0e0e0" stroke-width="1.2"/></svg><div class="a" style="left:766px;top:19px;width:11px;height:1px;background:#f0f0f0"></div><div class="a" style="left:813px;top:15px;width:10px;height:10px;border:1px solid #f0f0f0;border-radius:1.5px"></div><svg class="a" style="left:859px;top:15px" width="10" height="10"><path d="M0.5,0.5L9.5,9.5M9.5,0.5L0.5,9.5" stroke="#f0f0f0" stroke-width="1.1"/></svg><pre class="mono a" style="margin:0;left:8px;top:68px;font-size:15px;line-height:19px;color:#cccccc;-webkit-text-stroke:.3px #cccccc">C:\Users\uxman&gt;ping 192.168.18.15 -t

Pinging 192.168.18.15 with 32 bytes of data:
Request timed out.
Request timed out.
Request timed out.
Request timed out.
Request timed out.
Request timed out.
Request timed out.</pre><div class="a" style="left:8px;top:257px;width:1px;height:19px;background:#d8d8d8"></div></div>
<div class="ann" style="left:16px;top:232px;font-size:16.8px;transform:scaleX(1.005);transform-origin:0 50%">Network of 1st Mikrotik added to 2nd Mikrotik</div><div class="ann" style="left:1233.5px;top:174px;font-size:16.8px;transform:scaleX(0.943);transform-origin:0 50%">MY PC CONNECTED WITH MIKROTIK</div><div class="ann" style="left:75.5px;top:818px;font-size:16.8px;transform:scaleX(0.964);transform-origin:0 50%">MIKROTIK Router Ping to Printer</div><div class="ann" style="left:697px;top:806px;font-size:16.8px;transform:scaleX(0.962);transform-origin:0 50%">PC not Ping to Printer</div><svg class="a" style="left:0;top:0" width="1550" height="1299" fill="none" stroke="#000" stroke-width="5" stroke-linejoin="round"><path stroke-width="4.9" d="M97.6,123.5L83.5,169.5H90.5V215.5H104.5V169.5H111.7Z"/><path d="M1321.4,204.4H1341.4V292.8H1351.4L1331.3,381.1L1311.7,292.8H1321.4Z"/><path d="M134.5,845.4H147.6V874.4H153.6L141.4,904.4L128.4,874.4H134.5Z"/><path d="M780.5,834.4H800.5V868.4H810.6L790.5,902.5L770.5,868.4H780.5Z"/></svg>
</body></html>
